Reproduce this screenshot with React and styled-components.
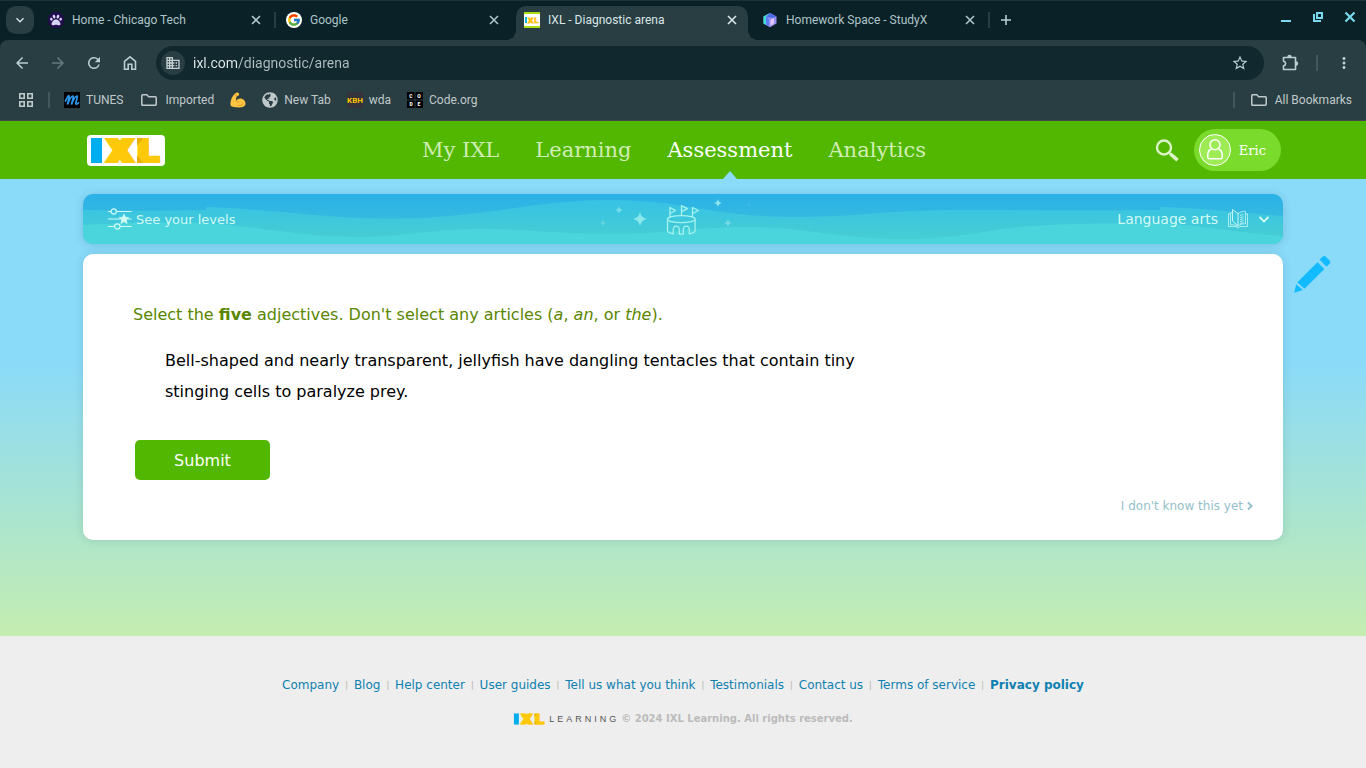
import React from "react"
import styled, { createGlobalStyle, css } from "styled-components"
import { FaGlobeAmericas, FaPaw } from "react-icons/fa"
import { FcGoogle } from "react-icons/fc"
import {
  MdArrowBack,
  MdArrowForward,
  MdDomain,
  MdKeyboardArrowDown,
  MdMoreVert,
  MdRefresh,
  MdStarBorder,
} from "react-icons/md"

const sans = `"DejaVu Sans", Verdana, sans-serif`
const slab = `"Roboto Slab", "DejaVu Serif", serif`

const GlobalStyle = createGlobalStyle`
  * {
    box-sizing: border-box;
  }
  body {
    margin: 0;
    font-family: ${sans};
  }
  button {
    font-family: inherit;
    padding: 0;
    border: 0;
    background: none;
    color: inherit;
    cursor: pointer;
  }
  a {
    color: inherit;
    text-decoration: none;
  }
  svg {
    display: block;
    flex-shrink: 0;
    overflow: visible;
  }
`

const Page = styled.div`
  min-height: 100vh;
  display: flex;
  flex-direction: column;
`

/* ---------- browser chrome ---------- */

const Chrome = styled.header`
  background: #0a2227;
  font-family: Roboto, sans-serif;
  font-size: 12px;
  color: #adc5c9;
  border-bottom: 1px solid #47474f;
`

const TabStrip = styled.div`
  height: 40px;
  display: flex;
  align-items: flex-start;
  padding: 6px 8px 0 6px;
  box-shadow: inset 0 1px #1b3338;
`

const TabSearch = styled.button`
  width: 28px;
  height: 28px;
  margin-right: 6px;
  border-radius: 10px;
  && {
    background: #283e43;
    color: #d5e3e5;
  }
  display: grid;
  place-items: center;
`

const Tab = styled.div`
  position: relative;
  flex: 0 1 232px;
  min-width: 0;
  height: 34px;
  padding: 0 8px 6px;
  display: flex;
  align-items: center;
  gap: 8px;
  ${({ $active }) =>
    $active &&
    css`
      background: #283e43;
      color: #dbe6e8;
      border-radius: 10px 10px 0 0;
      &::before,
      &::after {
        content: "";
        position: absolute;
        bottom: 0;
        width: 10px;
        height: 10px;
      }
      &::before {
        right: 100%;
        background: radial-gradient(circle at 0 0, transparent 10px, #283e43 10px);
      }
      &::after {
        left: 100%;
        background: radial-gradient(circle at 100% 0, transparent 10px, #283e43 10px);
      }
    `}
`

const TabTitle = styled.a`
  flex: 1;
  overflow: hidden;
  white-space: nowrap;
`

const TabClose = styled.button`
  width: 16px;
  height: 16px;
  display: grid;
  place-items: center;
`

const TabGap = styled.div`
  width: 6px;
  height: 28px;
  display: grid;
  place-items: center;
  &::before {
    content: "";
    width: 2px;
    height: 16px;
    background: ${({ $line }) => ($line ? "#283e43" : "transparent")};
  }
`

const IconButton = styled.button`
  width: 28px;
  height: 28px;
  display: grid;
  place-items: center;
  && {
    color: ${({ $dim }) => ($dim ? "#647a7f" : "#b9ced2")};
  }
`

const WindowControls = styled.div`
  margin-left: auto;
  height: 22px;
  display: flex;
  color: #79d9ee;
  button {
    width: 32px;
    display: grid;
    place-items: center;
  }
  button:last-child {
    width: 16px;
    margin-left: 8px;
  }
`

const Toolbar = styled.div`
  background: #283e43;
  border-radius: 8px 8px 0 0;
`

const AddressRow = styled.div`
  height: 46px;
  padding: 0 8px;
  display: flex;
  align-items: center;
  gap: 8px;
`

const Omnibox = styled.label`
  flex: 1;
  min-width: 0;
  height: 34px;
  margin: 0 4px;
  padding: 0 10px 0 5px;
  border-radius: 17px;
  background: #11292e;
  display: flex;
  align-items: center;
  gap: 8px;
`

const SiteInfo = styled.button`
  width: 24px;
  height: 24px;
  border-radius: 50%;
  && {
    background: #283e43;
    color: #c3cfd1;
  }
  display: grid;
  place-items: center;
`

const Url = styled.input`
  flex: 1;
  min-width: 0;
  padding: 0;
  border: 0;
  outline: none;
  font: 14px/20px Roboto, sans-serif;
  color: transparent;
  background: linear-gradient(90deg, #e6eced 44px, #b1bfc2 44px);
  background-clip: text;
`

const Divider = styled.div`
  width: 2px;
  height: 16px;
  background: #43585d;
  ${AddressRow} & {
    margin: 0 4px;
  }
`

const BookmarkBar = styled.nav`
  height: 34px;
  padding: 0 14px 6px 18px;
  display: flex;
  align-items: center;
  gap: 14px;
  color: #c0c9ca;
`

const Bookmarks = styled.div`
  flex: 1;
  display: flex;
  align-items: center;
  gap: 16px;
`

const Bookmark = styled.a`
  display: flex;
  align-items: center;
  gap: 6px;
  white-space: nowrap;
`

/* ---------- site header ---------- */

const SiteHeader = styled.div`
  background: #52b700;
`

const HeaderInner = styled.div`
  height: 58px;
  max-width: 1200px;
  width: 100%;
  margin: 0 auto;
  padding: 0 2px 0 4px;
  display: grid;
  grid-template-columns: 1fr auto 1fr;
  align-items: center;
`

const LogoLink = styled.a`
  justify-self: start;
  background: #fff;
  border-radius: 4px;
`

const MainNav = styled.nav`
  height: 100%;
  display: flex;
  gap: 36px;
  padding-right: 20px;
  font-family: ${slab};
  font-size: 21px;
  font-weight: 300;
  line-height: 58px;
`

const NavLink = styled.a`
  position: relative;
  color: ${({ $active }) => ($active ? "#fff" : "#d0eeb4")};
  ${({ $active }) =>
    $active &&
    css`
      &::after {
        content: "";
        position: absolute;
        bottom: 0;
        left: 50%;
        margin-left: -7px;
        border: 7px solid transparent;
        border-top: 0;
        border-bottom: 8px solid #8adaf8;
      }
    `}
`

const HeaderTools = styled.div`
  justify-self: end;
  display: flex;
  align-items: center;
  gap: 14px;
`

const UserButton = styled.button`
  height: 42px;
  border-radius: 21px;
  && {
    padding: 0 15px 0 5px;
    background: #7bdb2c;
    color: #fff;
  }
  display: flex;
  align-items: center;
  gap: 8px;
  font-family: ${slab};
  font-size: 13px;
`

/* ---------- arena ---------- */

const Arena = styled.main`
  flex: 1;
  display: grid;
  grid-template-columns: 1fr minmax(0, 1200px) 1fr;
  align-content: start;
  row-gap: 10px;
  padding: 15px 0 40px;
  background: linear-gradient(#8adaf9 40%, #c4edb0);
`

const LevelBar = styled.div`
  grid-column: 2;
  position: relative;
  height: 50px;
  padding: 0 13px 0 25px;
  border-radius: 10px;
  overflow: hidden;
  display: grid;
  grid-template-columns: 1fr auto 1fr;
  align-items: center;
  color: #d2fbf6;
  box-shadow: 0 1px 10px rgba(0, 60, 90, 0.16);
`

const WaveArt = styled.svg`
  position: absolute;
  inset: 0;
  width: 100%;
  height: 100%;
`

const LevelsButton = styled.button`
  position: relative;
  justify-self: start;
  display: flex;
  align-items: center;
  gap: 4px;
  font-size: 13px;
  line-height: 18px;
  span {
    padding-top: 2px;
  }
`

const CastleArt = styled.svg`
  position: relative;
  margin-right: 12px;
`

const SubjectButton = styled.button`
  position: relative;
  justify-self: end;
  display: flex;
  align-items: center;
  gap: 9px;
  font-size: 14px;
`

const Card = styled.section`
  grid-column: 2;
  padding: 49px 30px 26px 50px;
  border-radius: 10px;
  background: #fff;
  box-shadow: 0 1px 10px rgba(0, 60, 60, 0.14);
  display: flex;
  flex-direction: column;
  align-items: flex-start;
`

const Instruction = styled.p`
  margin: 0 0 18px;
  font-size: 16px;
  line-height: 24px;
  color: #5a8600;
`

const Sentence = styled.p`
  margin: 0 0 33px 32px;
  max-width: 720px;
  font-size: 16px;
  line-height: 31px;
  color: #000;
`

const SubmitButton = styled.button`
  width: 135px;
  height: 40px;
  margin-left: 2px;
  border-radius: 5px;
  && {
    background: #52b700;
    color: #fff;
  }
  font-size: 16px;
`

const SkipButton = styled.button`
  align-self: flex-end;
  margin-top: 18px;
  display: flex;
  align-items: center;
  gap: 4px;
  font-size: 12px;
  line-height: 16px;
  && {
    color: #94bfcb;
  }
`

const ScratchButton = styled.button`
  grid-column: 3;
  justify-self: start;
  align-self: start;
  margin: 1px 0 0 10px;
`

/* ---------- footer ---------- */

const Footer = styled.footer`
  background: #eee;
  padding: 40px 0 41px;
  display: flex;
  flex-direction: column;
  align-items: center;
  gap: 17px;
`

const FooterLinks = styled.nav`
  display: flex;
  flex-wrap: wrap;
  align-items: center;
  gap: 6px;
  font-size: 12px;
  line-height: 16px;
  color: #0e81b1;
  a:last-child {
    font-weight: bold;
  }
`

const Pipe = styled.span`
  padding-top: 2px;
  font-size: 8px;
  color: #b3b3a8;
`

const Copyright = styled.div`
  display: flex;
  align-items: center;
  font-size: 10px;
  font-weight: bold;
  line-height: 16px;
  color: #bbb;
`

const Wordmark = styled.span`
  margin: 0 2px 0 3px;
  font: 9px/16px "Liberation Sans", Arial, sans-serif;
  letter-spacing: 3px;
  color: #555;
`

/* ---------- drawings ---------- */

const IxlMark = ({ width, height, viewBox, id }) => (
  <svg width={width} height={height} viewBox={viewBox} role="img" aria-label="IXL">
    <clipPath id={id}>
      <rect x="0" y="3" width="74" height="25" />
    </clipPath>
    <rect x="4" y="3" width="11" height="25" fill="#00aeef" />
    <g
      clipPath={`url(#${id})`}
      fontFamily="DejaVu Sans"
      fontWeight="bold"
      fontSize="34"
      fill="#ffc90b"
      stroke="#ffc90b"
    >
      <text x="20" y="28" strokeWidth="6">
        X
      </text>
      <text x="50" y="28" strokeWidth="5">
        L
      </text>
      <path d="M50 3h6l-6 8zM50 20l6 8h-6z" fill="#e6ae0a" stroke="none" />
    </g>
  </svg>
)

const CloseIcon = () => (
  <svg width="12" height="12" viewBox="0 0 12 12" fill="none" stroke="currentColor" strokeWidth="1.6">
    <path d="M2 2l8 8M10 2l-8 8" />
  </svg>
)

const FolderIcon = () => (
  <svg width="20" height="16" viewBox="0 0 20 16" fill="none" stroke="currentColor" strokeWidth="1.5">
    <path d="M2.8 3.5a.8.8 0 0 1 .8-.8h4.2l1.900 2h6.700a.8.8 0 0 1 .8.8v7a.8.8 0 0 1-.8.8H3.600a.8.8 0 0 1-.8-.8z" />
  </svg>
)

const IxlFavicon = () => (
  <svg width="16" height="16" viewBox="0 0 16 16">
    <path fill="#fff" d="M0 0h16v16H0z" />
    <path fill="#a9dc13" d="M0 0h16v2H0zM0 14h16v2H0z" />
    <path fill="#16b0ee" d="M1 5h2v6H1z" />
    <g fill="#ffc20b" stroke="#ffc20b" fontFamily="DejaVu Sans" fontWeight="bold" fontSize="7">
      <text x="4" y="10.500">X</text>
      <text x="10" y="10.500" strokeWidth=".6">L</text>
    </g>
  </svg>
)

const PawFavicon = () => (
  <svg width="16" height="16" viewBox="0 0 16 16">
    <circle cx="8" cy="8" r="8" fill="#240b4d" />
    <FaPaw x="2" y="2" size="12" color="#d6d5f4" />
  </svg>
)

const GoogleFavicon = () => (
  <svg width="16" height="16" viewBox="0 0 16 16">
    <circle cx="8" cy="8" r="8" fill="#fff" />
    <FcGoogle x="1" y="1" size="14" />
  </svg>
)

const StudyFavicon = () => (
  <svg width="16" height="16" viewBox="0 0 16 16">
    <path d="M8 1l6.5 3.5v7L8 15.200l-6.500-3.700v-7z" fill="#9d8ff5" />
    <path d="M8 1L1.500 4.500v7L4 13V5z" fill="#3ee0d3" />
    <path d="M8 1l6.500 3.500L11 6 4 5z" fill="#4c6be6" />
    <path d="M4 5l3 2v7.600L4 13z" fill="#5b7cf3" />
    <path d="M8.500 8L12 6v5l-3.500 3z" fill="#e2cbfc" />
  </svg>
)

const TunesIcon = () => (
  <svg width="16" height="16" viewBox="0 0 16 16">
    <path fill="#000" d="M0 0h16v16H0z" />
    <path
      d="M1.500 9C3 6 4 3.500 5 3.700 6 4 4 9 3.500 12.500 5 8.500 7.500 4 9 4c1.200.4-1 5-1.500 8.500C9 8.500 11.500 4 13 4c1.200.5-1.200 5-1.200 7.500.2 1.300 1.700.5 2.700-.8"
      fill="none"
      stroke="#2b98ee"
      strokeWidth="1.700"
      strokeLinecap="round"
    />
  </svg>
)

const ArmIcon = () => (
  <svg width="16" height="16" viewBox="0 0 16 16">
    <path
      d="M5.500 1.200C6.600.3 8.400.4 9 1.600c.4 1-.1 2-.9 2.300l-1.400.3c-.5 1.800-.9 3-.5 4.400C7.400 6.600 10 5.900 12 6.700c2.600 1 3.600 3.400 3.500 5.400-.2 2.200-3 3.500-6.500 3.400-4-.1-7.400-.4-8.300-1.700C-.1 12 .8 8 2 5.500 3 3.500 4.200 2.100 5.500 1.200z"
      fill="#fcc441"
    />
    <path
      d="M6.200 8.600c.4 1.200 1.300 1.700 2.500 1.400M8 13.500c2 .3 4-.3 5-1.600M4.800 2.800l2 .8"
      fill="none"
      stroke="#d8912b"
      strokeWidth=".8"
      strokeLinecap="round"
    />
  </svg>
)

const KbhIcon = () => (
  <svg width="16" height="16" viewBox="0 0 16 16">
    <path fill="#33343a" d="M0 0h16v16H0z" />
    <text x="8" y="11" textAnchor="middle" fill="#fdc300" fontFamily="Roboto" fontWeight="700" fontSize="8">
      KBH
    </text>
  </svg>
)

const CodeIcon = () => (
  <svg width="16" height="16" viewBox="0 0 16 16">
    <path fill="#000" d="M0 0h7.500v7.500H0zM8.500 0H16v7.500H8.500zM0 8.500h7.500V16H0zM8.500 8.500H16V16H8.500z" />
    <g fill="#fff" fontFamily="Roboto" fontWeight="900" fontSize="5" textAnchor="middle">
      <text x="4" y="5.500">C</text>
      <text x="12" y="5.500">O</text>
      <text x="4" y="14">D</text>
      <text x="12" y="14">E</text>
    </g>
  </svg>
)

const AppsIcon = () => (
  <svg width="16" height="16" viewBox="0 0 16 16" fill="none" stroke="currentColor" strokeWidth="1.600">
    <path d="M1.800 1.800h4.400v4.400H1.800zM9.800 1.800h4.400v4.400H9.800zM1.800 9.800h4.400v4.400H1.800zM9.800 9.800h4.400v4.400H9.800z" />
  </svg>
)

const HomeIcon = () => (
  <svg width="16" height="16" viewBox="0 0 16 16" fill="none" stroke="currentColor" strokeWidth="1.600">
    <path d="M2.500 6.300L8 1.800l5.500 4.500v7.900H9.800V9.300H6.200v4.900H2.500z" />
  </svg>
)

const PuzzleIcon = () => (
  <svg width="18" height="18" viewBox="0 0 18 18">
    <path
      d="M2.500 3.500h12v12h-12v-3.700c2.800-.6 2.800-4 0-4.600z"
      fill="none"
      stroke="currentColor"
      strokeWidth="1.600"
      strokeLinejoin="round"
    />
    <path d="M6.300 3a2.200 2.200 0 0 1 4.400 0zM15 7.300a2.200 2.200 0 0 1 0 4.400z" fill="currentColor" />
  </svg>
)

const SearchIcon = () => (
  <svg width="25" height="25" viewBox="0 0 25 25" fill="none" stroke="#dcf3c8">
    <circle cx="9" cy="9.500" r="7" strokeWidth="2.400" />
    <path d="M14 14.500l3 3" strokeWidth="2.400" />
    <path d="M15.500 16l7 6.200" strokeWidth="3.600" />
  </svg>
)

const AvatarIcon = () => (
  <svg width="32" height="32" viewBox="0 0 32 32" stroke="#fff">
    <circle cx="16" cy="16" r="15.500" fill="#9dec55" />
    <g fill="none" strokeWidth="1.500">
      <circle cx="16" cy="10.800" r="5" />
      <path d="M12.300 15.200C9.500 16 8.800 18.500 8.800 21v2.200c0 .9.600 1.500 1.500 1.500h11.400c.9 0 1.500-.6 1.500-1.500V21c0-2.500-.7-5-3.500-5.800" />
    </g>
  </svg>
)

const LevelsIcon = () => (
  <svg width="24" height="24" viewBox="0 0 24 24" fill="none" stroke="currentColor" strokeWidth="1.200">
    <path d="M0 4.500h3M8.500 4.500H23.500M0 12h12M19.500 12h4M0 19.500h6.500M12 19.500h11.500" />
    <circle cx="5.700" cy="4.500" r="2.700" />
    <circle cx="9.300" cy="19.500" r="2.700" />
    <path
      d="M16 7l1.500 3.200 3.500.4-2.600 2.400.7 3.500-3.100-1.800-3.100 1.800.7-3.500L11 10.600l3.500-.4z"
      fill="currentColor"
      stroke="currentColor"
      strokeWidth=".6"
      strokeLinejoin="round"
    />
  </svg>
)

const BookIcon = () => (
  <svg width="22" height="22" viewBox="0 0 22 22" fill="none" stroke="currentColor" strokeWidth=".9" strokeLinejoin="round">
    <path d="M5.500 1.500v11.500l5.500 4.700V5.500z" />
    <path d="M11 6c1.500-2 5-3 7.500-2.700v12.500c-2.500-.2-6 .5-7.500 2.400" opacity=".8" />
    <path
      d="M5.500 4.500l-2 .3v12c2.500-.3 5.500.3 7.500 1.900M3.500 5.800H1.500v12.700h7.500c1 0 1 1.700 2 1.700s1-1.700 2-1.700h7.500V5.800h-2"
      opacity=".8"
    />
    <path
      d="M13 7.500l3.500-1M13 9.500l3.500-.8M13 11.500l3.500-.8M13 13.500l3.500-.8M13 15.500l3.500-.8"
      opacity=".8"
    />
  </svg>
)

const PencilIcon = () => (
  <svg width="38" height="38" viewBox="0 0 38 38" fill="#12bbff">
    <path d="M26.500 4.600L29.600 1.700a2.400 2.400 0 0 1 3.300 0l3.700 3.700a2.400 2.400 0 0 1 0 3.300L33.500 11.800z" />
    <path d="M24.500 7.200l6.900 6.900L11.400 33.700l-7.100-6.500z" />
    <path d="M3.200 29.300l6.600 5.800L1.200 37.800z" />
  </svg>
)

const sparkles = [
  [603, 223, 3, 0.35],
  [619, 210, 4, 0.5],
  [640, 219, 7, 0.75],
  [718, 203, 4, 0.8],
  [728, 223, 4, 0.5],
  [749, 205, 1, 0.5],
]

const sparklePath = (x, y, r) =>
  `M${x} ${y - r}Q${x + r / 6} ${y - r / 6} ${x + r} ${y}Q${x + r / 6} ${y + r / 6} ${x} ${y + r}Q${x - r / 6} ${
    y + r / 6
  } ${x - r} ${y}Q${x - r / 6} ${y - r / 6} ${x} ${y - r}z`

const Castle = () => (
  <CastleArt width="170" height="50" viewBox="598 194 170 50" aria-hidden="true">
    {sparkles.map(([x, y, r, o]) => (
      <path key={x} d={sparklePath(x, y, r)} fill="#a5f3ee" opacity={o} />
    ))}
    <g fill="none" stroke="#a5f3ee" strokeWidth="1.300" strokeLinejoin="round">
      <ellipse cx="681.300" cy="219.200" rx="13.800" ry="3.500" />
      <path d="M667.500 219.500v11c0 1.800 2.500 2.800 5.800 3.300v-3.600c0-5.400 6-5.400 6 0v4h4v-4c0-5.400 6-5.400 6 0v3.600c3.300-.5 5.800-1.500 5.800-3.300v-11" />
      <path d="M670 217v-9.500l5.500 3-5.500 3M681.500 215.500v-9.800l5.800 3-5.800 3M692.500 217v-9.500l5.800 3-5.800 3" />
    </g>
  </CastleArt>
)

const Waves = () => (
  <WaveArt viewBox="0 0 1200 50" preserveAspectRatio="none" aria-hidden="true">
    <defs>
      <linearGradient id="deep" x2="0" y2="1">
        <stop stopColor="#2ab1e7" />
        <stop offset="1" stopColor="#42c2d8" />
      </linearGradient>
      <linearGradient id="mid" gradientUnits="userSpaceOnUse" x1="0" y1="5" x2="0" y2="45">
        <stop stopColor="#37c2e5" />
        <stop offset="1" stopColor="#46cdd3" />
      </linearGradient>
    </defs>
    <path d="M0 0h1200v50H0z" fill="url(#deep)" />
    <path
      d="M0 16C40 17 80 17 123 16V13C190 15 240 25 314 24.500C400 24 450 6 527 6C600 6 630 23 710 23C780 23 800 16 880 16C950 16 1010 17 1077 16V13C1120 14 1160 19 1200 22V50H0z"
      fill="url(#mid)"
    />
    <path
      d="M0 31C40 29 80 28 123 29C180 33 220 43 274 43C320 43 345 35 400 35C450 35 480 40 525 40C580 40 610 33 665 33C720 33 760 45 820 45C880 45 900 35 950 32C1000 29 1040 29 1077 29C1120 32 1160 39 1200 42V50H0z"
      fill="#4ad5dc"
    />
  </WaveArt>
)

/* ---------- page data ---------- */

const tabs = [
  { title: "Home - Chicago Tech", icon: <PawFavicon />, line: true },
  { title: "Google", icon: <GoogleFavicon /> },
  { title: "IXL - Diagnostic arena", icon: <IxlFavicon />, active: true },
  { title: "Homework Space - StudyX", icon: <StudyFavicon />, line: true },
]

const bookmarks = [
  { label: "TUNES", icon: <TunesIcon /> },
  { label: "Imported", icon: <FolderIcon /> },
  { icon: <ArmIcon />, name: "Strength" },
  { label: "New Tab", icon: <FaGlobeAmericas size={16} /> },
  { label: "wda", icon: <KbhIcon /> },
  { label: "Code.org", icon: <CodeIcon /> },
]

const navItems = ["My IXL", "Learning", "Assessment", "Analytics"]

const footerLinks = [
  "Company",
  "Blog",
  "Help center",
  "User guides",
  "Tell us what you think",
  "Testimonials",
  "Contact us",
  "Terms of service",
  "Privacy policy",
]

const BrowserChrome = () => (
  <Chrome>
    <TabStrip>
      <TabSearch aria-label="Search tabs">
        <MdKeyboardArrowDown size={16} />
      </TabSearch>
      {tabs.map(({ title, icon, active, line }) => (
        <React.Fragment key={title}>
          <Tab $active={active}>
            {icon}
            <TabTitle href="#">{title}</TabTitle>
            <TabClose aria-label={`Close ${title}`}>
              <CloseIcon />
            </TabClose>
          </Tab>
          <TabGap $line={line} />
        </React.Fragment>
      ))}
      <IconButton aria-label="New tab">
        <svg width="12" height="12" viewBox="0 0 12 12" stroke="currentColor" strokeWidth="1.600">
          <path d="M6 1v10M1 6h10" />
        </svg>
      </IconButton>
      <WindowControls>
        <button aria-label="Minimize">
          <svg width="12" height="12" viewBox="0 0 12 12" fill="currentColor">
            <path d="M1 9h10v2H1z" />
          </svg>
        </button>
        <button aria-label="Restore">
          <svg width="12" height="12" viewBox="0 0 12 12" fill="none" stroke="currentColor" strokeWidth="2">
            <path d="M5 2h5v5H5zM2 3v7h7" />
          </svg>
        </button>
        <button aria-label="Close window">
          <svg width="12" height="12" viewBox="0 0 12 12" stroke="currentColor" strokeWidth="2.200">
            <path d="M1.500 1.500l9 9M10.500 1.500l-9 9" />
          </svg>
        </button>
      </WindowControls>
    </TabStrip>
    <Toolbar>
      <AddressRow>
        <IconButton aria-label="Back">
          <MdArrowBack size={18} />
        </IconButton>
        <IconButton $dim aria-label="Forward">
          <MdArrowForward size={18} />
        </IconButton>
        <IconButton aria-label="Reload">
          <MdRefresh size={18} />
        </IconButton>
        <IconButton aria-label="Home">
          <HomeIcon />
        </IconButton>
        <Omnibox>
          <SiteInfo aria-label="Site information">
            <MdDomain size={16} />
          </SiteInfo>
          <Url aria-label="Address" defaultValue="ixl.com/diagnostic/arena" />
          <IconButton aria-label="Bookmark this page">
            <MdStarBorder size={18} />
          </IconButton>
        </Omnibox>
        <IconButton aria-label="Extensions">
          <PuzzleIcon />
        </IconButton>
        <Divider />
        <IconButton aria-label="Menu">
          <MdMoreVert size={18} />
        </IconButton>
      </AddressRow>
      <BookmarkBar>
        <AppsIcon />
        <Divider />
        <Bookmarks>
          {bookmarks.map(({ label, icon, name }) => (
            <Bookmark key={label || name} href="#" aria-label={label || name}>
              {icon}
              {label}
            </Bookmark>
          ))}
        </Bookmarks>
        <Divider />
        <Bookmark href="#">
          <FolderIcon />
          All Bookmarks
        </Bookmark>
      </BookmarkBar>
    </Toolbar>
  </Chrome>
)

const App = () => (
  <Page>
    <GlobalStyle />
    <BrowserChrome />
    <SiteHeader>
      <HeaderInner>
        <LogoLink href="#">
          <IxlMark id="header-mark" width="78" height="31" viewBox="0 0 78 31" />
        </LogoLink>
        <MainNav>
          {navItems.map((item) => (
            <NavLink key={item} href="#" $active={item === "Assessment"}>
              {item}
            </NavLink>
          ))}
        </MainNav>
        <HeaderTools>
          <button aria-label="Search">
            <SearchIcon />
          </button>
          <UserButton>
            <AvatarIcon />
            Eric
          </UserButton>
        </HeaderTools>
      </HeaderInner>
    </SiteHeader>
    <Arena>
      <LevelBar>
        <Waves />
        <LevelsButton>
          <LevelsIcon />
          <span>See your levels</span>
        </LevelsButton>
        <Castle />
        <SubjectButton>
          Language arts
          <BookIcon />
          <svg width="12" height="14" viewBox="0 0 12 14" fill="none" stroke="currentColor" strokeWidth="1.800">
            <path d="M1.500 5L6 9.500 10.500 5" />
          </svg>
        </SubjectButton>
      </LevelBar>
      <Card>
        <Instruction>
          Select the <b>five</b> adjectives. Don't select any articles (<i>a</i>, <i>an</i>, or <i>the</i>).
        </Instruction>
        <Sentence>
          Bell-shaped and nearly transparent, jellyfish have dangling tentacles that contain tiny stinging cells to
          paralyze prey.
        </Sentence>
        <SubmitButton>Submit</SubmitButton>
        <SkipButton>
          I don't know this yet
          <svg width="6" height="8" viewBox="0 0 6 8" fill="none" stroke="currentColor" strokeWidth="1.800">
            <path d="M1 .5L4.700 4 1 7.500" />
          </svg>
        </SkipButton>
      </Card>
      <ScratchButton aria-label="Scratchpad">
        <PencilIcon />
      </ScratchButton>
    </Arena>
    <Footer>
      <FooterLinks>
        {footerLinks.map((label, i) => (
          <React.Fragment key={label}>
            {i > 0 && <Pipe>|</Pipe>}
            <a href="#">{label}</a>
          </React.Fragment>
        ))}
      </FooterLinks>
      <Copyright>
        <IxlMark id="footer-mark" width="33" height="12" viewBox="4 2 70 27" />
        <Wordmark>LEARNING</Wordmark>
        <span>© 2024 IXL Learning. All rights reserved.</span>
      </Copyright>
    </Footer>
  </Page>
)

export default App
